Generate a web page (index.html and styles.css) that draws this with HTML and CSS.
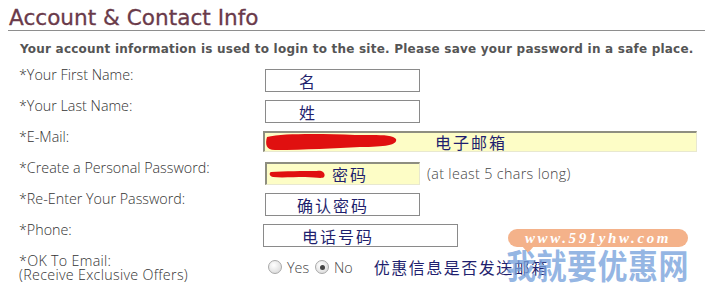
FILE: index.html
```html
<!DOCTYPE html>
<html>
<head>
<meta charset="utf-8">
<link rel="stylesheet" href="styles.css">
</head>
<body>
<div class="page">
  <h1 class="title">Account &amp; Contact Info</h1>
  <p class="intro">Your account information is used to login to the site. Please save your password in a safe place.</p>
  <div class="form">
    <div class="row">
      <div class="label">*Your First Name:</div>
      <div class="cell"><div class="field short shift">
        <span class="val pad-first">名</span></div></div>
    </div>
    <div class="row">
      <div class="label">*Your Last Name:</div>
      <div class="cell"><div class="field short shift">
        <span class="val pad-first">姓</span></div></div>
    </div>
    <div class="row">
      <div class="label">*E-Mail:</div>
      <div class="cell"><div class="field wide filled">
        <svg class="scribble scribble-mail" viewBox="0 0 134 18" width="134" height="18"><path d="M2 4 C20 0 60 1 90 2 C110 2 128 1 131 6 C133 12 120 14 95 14 C70 15 40 17 10 17 C1 17 0 11 2 4 Z" fill="#e01010"/></svg>
        <span class="val pad-mail">电子邮箱</span></div></div>
    </div>
    <div class="row">
      <div class="label">*Create a Personal Password:</div>
      <div class="cell cell-inline"><div class="field short shift filled">
        <svg class="scribble scribble-pass" viewBox="0 0 56 12" width="56" height="12"><path d="M2 4 C15 3 35 3 48 3 C54 2 57 6 55 9 C53 11 46 9 36 9 C24 9 12 10 4 9 C0 8 0 5 2 4 Z" fill="#e01010"/></svg>
        <span class="val pad-pass">密码</span></div>
        <span class="hint">(at least 5 chars long)</span></div>
    </div>
    <div class="row">
      <div class="label">*Re-Enter Your Password:</div>
      <div class="cell"><div class="field short shift">
        <span class="val pad-confirm">确认密码</span></div></div>
    </div>
    <div class="row">
      <div class="label">*Phone:</div>
      <div class="cell"><div class="field phone">
        <span class="val pad-phone">电话号码</span></div></div>
    </div>
    <div class="row row-last">
      <div class="label label-two"><div>*OK To Email:</div><div>(Receive Exclusive Offers)</div></div>
      <div class="cell cell-radio">
        <span class="radio"></span><span class="opt">Yes</span>
        <span class="radio checked"></span><span class="opt">No</span>
        <span class="note">优惠信息是否发送邮箱</span>
      </div>
    </div>
  </div>
  <div class="watermark">
    <div class="pill">www.591yhw.com</div>
    <div class="brand">我就要优惠网</div>
  </div>
</div>
</body>
</html>
```
FILE: styles.css
```css
html, body {
  margin: 0;
  padding: 0;
  background: #ffffff;
}
.page {
  position: relative;
  width: 705px;
  height: 293px;
  overflow: hidden;
  font-family: "Open Sans", "Liberation Sans", sans-serif;
}
.title {
  margin: 0 0 0 8px;
  padding: 5px 0 0 1px;
  height: 25px;
  font-family: "DejaVu Sans", sans-serif;
  font-size: 21.6px;
  font-weight: normal;
  line-height: 25px;
  color: #6a3a4a;
  -webkit-text-stroke: 0.3px #6a3a4a;
  border-bottom: 1px solid #8e8e8e;
}
.intro {
  margin: 10px 0 0 20px;
  font-family: "DejaVu Sans", sans-serif;
  font-size: 12px;
  font-weight: bold;
  line-height: 16px;
  color: #555555;
  letter-spacing: 0.22px;
  white-space: nowrap;
}
.form {
  margin-top: 10px;
  padding-left: 19px;
}
.row {
  display: grid;
  grid-template-columns: 244px 1fr;
  height: 31px;
}
.label {
  font-size: 14.3px;
  line-height: 16px;
  color: #333333;
  font-weight: 300;
  white-space: nowrap;
}
.cell {
  padding-top: 2px;
}
.cell-inline {
  display: flex;
  align-items: flex-start;
  gap: 7px;
}
.field {
  position: relative;
  box-sizing: border-box;
  height: 23px;
  border: 1px solid #8a8a8a;
  background: #ffffff;
  display: flex;
  align-items: center;
}
.shift {
  margin-left: 2px;
}
.short {
  width: 155px;
}
.wide {
  width: 434px;
  height: 21px;
}
.phone {
  width: 195px;
}
.filled {
  background: #fdfdc6;
  border-top: 2px solid #8e8e80;
  border-left: 2px solid #8e8e80;
  border-right: 1px solid #e8e8d0;
  border-bottom: 1px solid #e8e8d0;
}
.val {
  font-family: "Noto Sans CJK SC", sans-serif;
  font-size: 16px;
  line-height: 20px;
  letter-spacing: 2px;
  color: #1f1f6e;
}
.pad-first { padding-left: 33px; }
.pad-mail { padding-left: 170px; }
.pad-pass { padding-left: 65px; }
.pad-confirm { padding-left: 31px; }
.pad-phone { padding-left: 38px; }
.scribble {
  position: absolute;
  display: block;
}
.scribble-mail {
  left: 0;
  top: 0;
}
.scribble-pass {
  left: 2px;
  top: 4px;
}
.hint {
  font-size: 14.3px;
  font-weight: 300;
  line-height: 23px;
  letter-spacing: 0.35px;
  color: #444444;
}
.row-last {
  height: 40px;
}
.label-two {
  padding-top: 1px;
  font-size: 14.3px;
  line-height: 14px;
  letter-spacing: 0.3px;
}
.cell-radio {
  display: flex;
  align-items: center;
  padding-top: 6px;
  height: 16px;
  margin-left: 2px;
}
.radio {
  box-sizing: border-box;
  width: 14px;
  height: 14px;
  border-radius: 50%;
  border: 1px solid #a8a8a8;
  background: radial-gradient(circle at 40% 35%, #ffffff, #d4d4d4);
  position: relative;
  margin-left: 3px;
}
.radio.checked::after {
  content: "";
  position: absolute;
  left: 3.5px;
  top: 3.5px;
  width: 5px;
  height: 5px;
  border-radius: 50%;
  background: #444444;
}
.opt {
  font-size: 14.3px;
  font-weight: 300;
  color: #444444;
  margin-left: 5px;
  margin-right: 3px;
}
.note {
  margin-left: 18px;
  font-family: "Noto Sans CJK SC", sans-serif;
  font-size: 16px;
  letter-spacing: 1.5px;
  color: #1f1f6e;
}
.watermark {
  position: absolute;
  left: 500px;
  top: 229px;
  width: 200px;
  height: 64px;
}
.pill {
  position: relative;
  margin-left: 8px;
  width: 180px;
  height: 18px;
  border-radius: 9px;
  background: #f4b28a;
  color: #ffffff;
  font-family: "Liberation Serif", serif;
  font-style: italic;
  font-weight: bold;
  font-size: 15px;
  line-height: 18px;
  letter-spacing: 2.6px;
  text-align: center;
}
.pill::after {
  content: "";
  position: absolute;
  left: 14px;
  top: 17px;
  border-left: 6px solid transparent;
  border-right: 6px solid transparent;
  border-top: 7px solid #f4b28a;
}
.brand {
  margin-top: 4px;
  margin-left: 6px;
  font-family: "Noto Sans CJK SC", sans-serif;
  font-weight: bold;
  font-size: 30px;
  line-height: 30px;
  letter-spacing: 0.5px;
  color: rgba(120, 162, 220, 0.78);
  white-space: nowrap;
  transform: scaleY(1.12);
  transform-origin: 0 100%;
}
```
